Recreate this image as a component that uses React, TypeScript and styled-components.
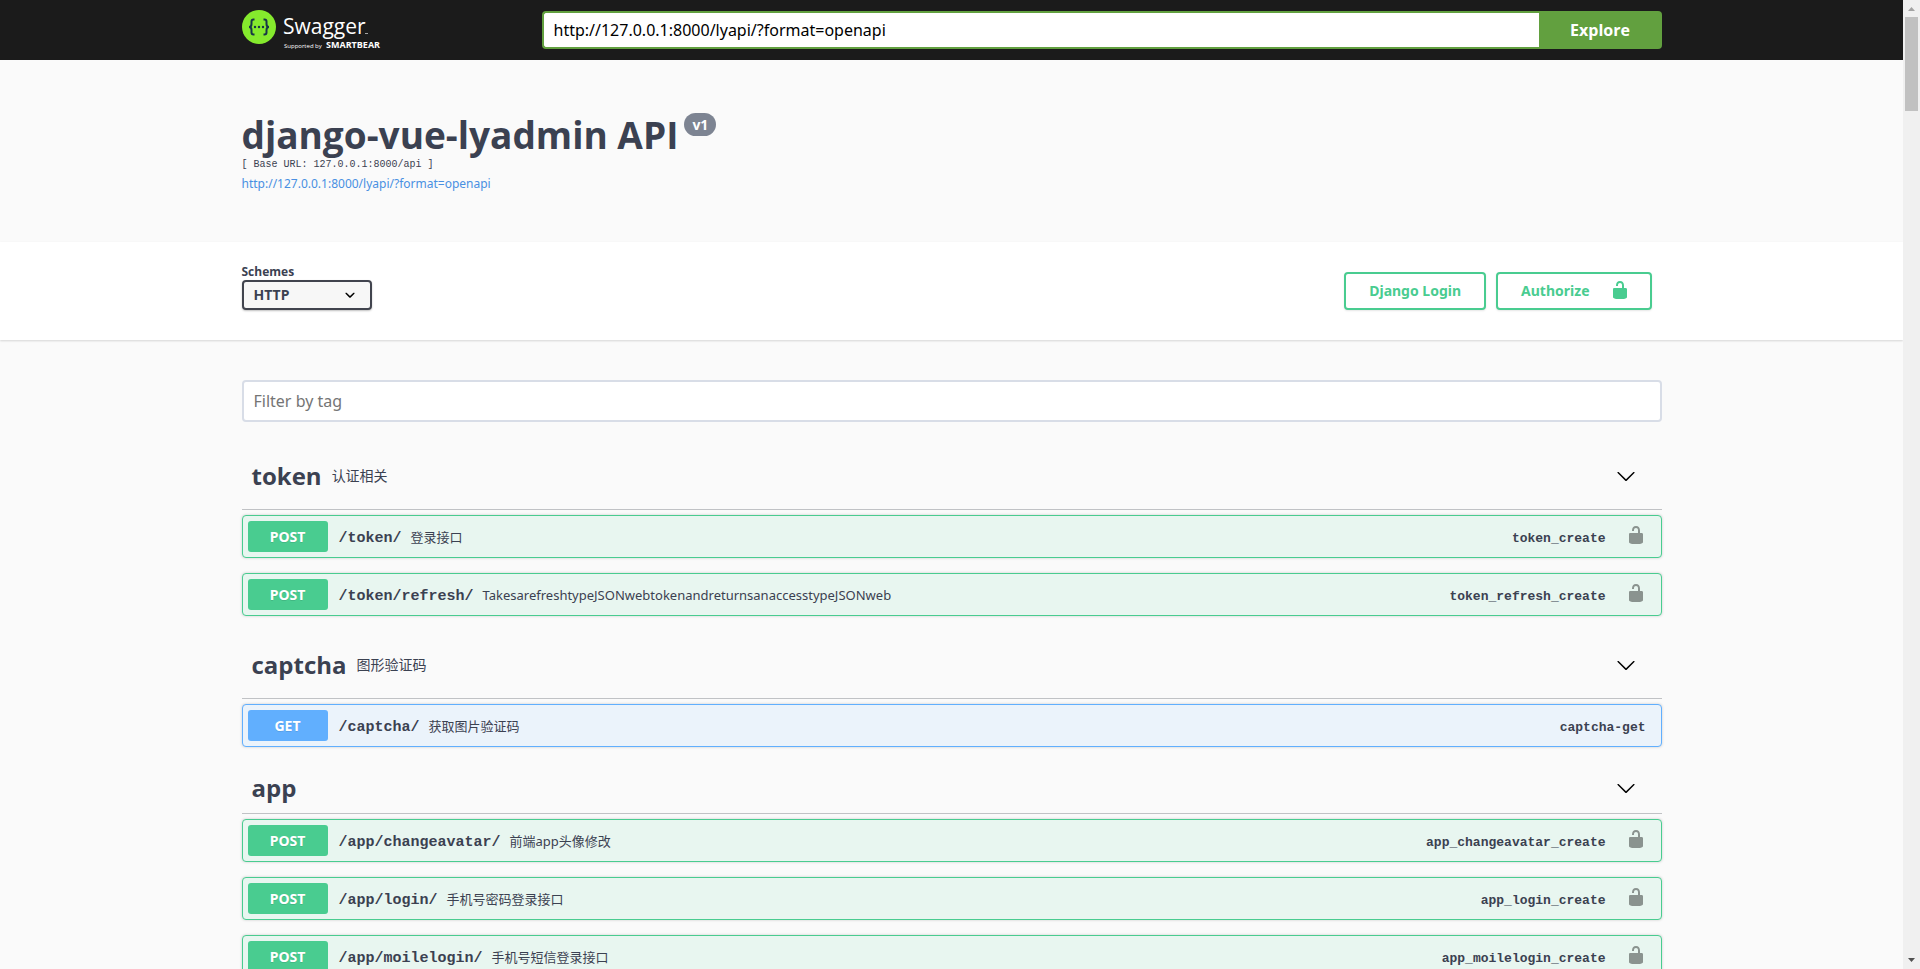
import React from "react";
import styled, { createGlobalStyle, css } from "styled-components";

const sans = `"Noto Sans", "Noto Sans CJK SC", sans-serif`;
const boldSans = `"Open Sans", "Noto Sans CJK SC", sans-serif`;
const mono = `"Liberation Mono", monospace`;

const GlobalStyle = createGlobalStyle`
  *, *::before, *::after { box-sizing: border-box; }
  body { margin: 0; background: #fafafa; color: #3b4151; font-family: ${sans}; }
  h1, h2, p { margin: 0; }
  h1, h2 { font-family: ${boldSans}; }
  button, input, select { font-family: ${sans}; }
`;

const Shell = styled.div`
  display: flex;
  height: 100vh;
`;

const Page = styled.div`
  flex: 1;
  min-width: 0;
  overflow-y: auto;
  scrollbar-width: none;
`;

const Wrapper = styled.div`
  width: 100%;
  max-width: 1460px;
  margin: 0 auto;
  padding: 0 20px;
`;

const Topbar = styled.header`
  background: #1b1b1b;
  padding: 10px 0;
`;

const TopbarRow = styled(Wrapper)`
  display: flex;
  align-items: center;
`;

const LogoLink = styled.a`
  flex: 0 0 300px;
  height: 40px;
  svg { display: block; }
`;

const UrlForm = styled.form`
  display: flex;
  flex: 1;
  height: 38px;
`;

const UrlInput = styled.input`
  flex: 1;
  min-width: 0;
  padding: 0 10px;
  border: 2px solid #62a03f;
  border-right: 0;
  border-radius: 4px 0 0 4px;
  background: #fff;
  color: #000;
  font-size: 16px;
  outline: none;
`;

const ExploreButton = styled.button`
  width: 123px;
  border: 0;
  border-radius: 0 4px 4px 0;
  background: #62a03f;
  color: #fff;
  font-family: ${boldSans};
  font-size: 16px;
  font-weight: 700;
`;

const Info = styled(Wrapper)`
  padding-top: 50px;
  padding-bottom: 49px;
`;

const Title = styled.h1`
  display: flex;
  align-items: flex-start;
  gap: 6px;
  font-size: 37px;
  line-height: 49px;
`;

const Version = styled.small`
  margin-top: 3px;
  padding: 0 8px;
  border-radius: 12px;
  background: #7d8492;
  color: #fff;
  font-size: 14px;
  line-height: 23px;
`;

const BaseUrl = styled.pre`
  margin: 0;
  font-family: ${mono};
  font-size: 10px;
  line-height: 12px;
`;

const SpecLink = styled.a`
  display: block;
  margin: 4px 0 0;
  color: #4990e2;
  font-size: 12px;
  line-height: 18px;
  text-decoration: none;
`;

const SchemeBar = styled.section`
  background: #fff;
  padding: 22px 0 30px;
  box-shadow: 0 1px 2px rgba(0, 0, 0, 0.15);
`;

const SchemeRow = styled(Wrapper)`
  display: flex;
  justify-content: space-between;
  align-items: flex-end;
`;

const SchemeLabel = styled.label`
  display: flex;
  flex-direction: column;
  font-family: ${boldSans};
  font-size: 12px;
  font-weight: 700;
  line-height: 16px;
`;

const SelectBox = styled.span`
  position: relative;
  width: 130px;
  svg {
    position: absolute;
    right: 12px;
    top: 5px;
    pointer-events: none;
  }
`;

const Select = styled.select`
  display: block;
  appearance: none;
  width: 100%;
  height: 30px;
  padding: 0 10px 2px;
  border: 2px solid #41444e;
  border-radius: 4px;
  background: #f7f7f7;
  box-shadow: 0 1px 2px rgba(0, 0, 0, 0.25);
  color: #3b4151;
  font-size: 14px;
  font-weight: 700;
`;

const AuthButtons = styled.div`
  display: flex;
  gap: 10px;
  padding-right: 10px;
`;

const AuthButton = styled.button`
  display: flex;
  align-items: center;
  justify-content: space-between;
  height: 38px;
  padding: 0 23px 2px;
  border: 2px solid #49cc90;
  border-radius: 4px;
  background: #fff;
  box-shadow: 0 1px 2px rgba(0, 0, 0, 0.1);
  color: #49cc90;
  font-size: 14px;
  font-weight: 700;
  svg { margin: 0 -3px 0 20px; fill: #49cc90; }
`;

const FilterInput = styled.input`
  display: block;
  width: 100%;
  height: 42px;
  margin: 40px 0 20px;
  padding: 0 10px;
  border: 2px solid #d8dde7;
  border-radius: 4px;
  background: #fff;
  font-size: 16px;
  outline: none;
  &::placeholder { color: #757575; opacity: 1; }
`;

const TagHeader = styled.div`
  display: flex;
  align-items: center;
  margin-bottom: 5px;
  padding: 10px 20px 10px 10px;
  border-bottom: 1px solid #c0c2c5;
`;

const TagName = styled.h2`
  font-size: 24px;
  line-height: 31px;
`;

const TagDescription = styled.p`
  padding: 14px 10px;
  font-size: 14px;
  line-height: 19px;
`;

const IconButton = styled.button`
  display: flex;
  margin-left: auto;
  padding: 0 6px;
  border: 0;
  background: none;
`;

type Method = "POST" | "GET";
const colors = {
  POST: { main: "#49cc90", tint: "#e8f6f0" },
  GET: { main: "#61affe", tint: "#ebf3fb" },
};

const OpBlock = styled.article<{ $method: Method }>`
  display: flex;
  align-items: center;
  height: 43px;
  margin-bottom: 15px;
  padding: 0 5px;
  border-radius: 4px;
  box-shadow: 0 0 3px rgba(0, 0, 0, 0.19);
  ${({ $method }) => css`
    border: 1px solid ${colors[$method].main};
    background: ${colors[$method].tint};
  `}
`;

const MethodBadge = styled.span<{ $method: Method }>`
  width: 80px;
  border-radius: 3px;
  background: ${({ $method }) => colors[$method].main};
  color: #fff;
  font-size: 14px;
  font-weight: 700;
  line-height: 31px;
  text-align: center;
  text-shadow: 0 1px 0 rgba(0, 0, 0, 0.1);
`;

const Path = styled.a`
  padding: 3px 9px 0 11px;
  color: #3b4151;
  font-family: ${mono};
  font-size: 15px;
  font-weight: 700;
  text-decoration: none;
`;

const Summary = styled.span`
  flex: 1;
  font-size: 13px;
`;

const OperationId = styled.span`
  padding: 3px 10px 0;
  font-family: ${mono};
  font-size: 13px;
  font-weight: 700;
`;

const LockButton = styled.button`
  padding: 0 10px 3px;
  border: 0;
  background: none;
  opacity: 0.4;
  svg { display: block; }
`;

const Scrollbar = styled.div`
  display: flex;
  flex-direction: column;
  align-items: center;
  width: 17px;
  background: #f0f0f0;
`;

const ScrollArrow = styled.svg`
  width: 17px;
  height: 17px;
  flex: none;
`;

const ScrollTrack = styled.div`
  flex: 1;
  width: 13px;
`;

const ScrollThumb = styled.div`
  height: 10%;
  background: #c1c1c1;
`;

const UnlockedIcon = () => (
  <svg width="20" height="20" viewBox="0 0 20 20" aria-hidden="true">
    <path d="M15.8 8H14V5.6C14 2.703 12.665 1 10 1 7.334 1 6 2.703 6 5.6V6h2v-.801C8 3.754 8.797 3 10 3c1.203 0 2 .754 2 2.199V8H4c-.553 0-1 .646-1 1.199V17c0 .549.428 1.139.951 1.307l1.197.387C5.672 18.861 6.55 19 7.1 19h5.8c.549 0 1.428-.139 1.951-.307l1.196-.387c.524-.167.953-.757.953-1.306V9.199C17 8.646 16.352 8 15.8 8z" />
  </svg>
);

const LargeArrow = () => (
  <svg width="20" height="20" viewBox="0 0 20 20" aria-hidden="true">
    <path d="M17.418 6.109c.272-.268.709-.268.979 0s.271.701 0 .969l-7.908 7.83c-.27.268-.707.268-.979 0l-7.908-7.83c-.27-.268-.27-.701 0-.969.271-.268.709-.268.979 0L10 13.25l7.418-7.141z" />
  </svg>
);

const SmallArrow = () => (
  <svg width="20" height="20" viewBox="0 0 20 20" aria-hidden="true">
    <path d="M13.418 7.859c.271-.268.709-.268.978 0s.272.701 0 .969l-3.908 3.83c-.27.268-.707.268-.979 0l-3.908-3.83c-.27-.267-.27-.701 0-.969.271-.268.709-.268.978 0L10 11l3.418-3.141z" />
  </svg>
);

const Logo = () => (
  <svg width="150" height="40" viewBox="0 0 150 40" role="img" aria-label="Swagger">
    <circle cx="17" cy="17" r="17" fill="#85ea2d" />
    <g fill="none" stroke="#173647" strokeWidth="2">
      <path d="M12.500 9.500h-1q-2 0-2 2v2.500q0 3-2.500 3q2.500 0 2.500 3v2.500q0 2 2 2h1" />
      <path d="M21.500 9.500h1q2 0 2 2v2.500q0 3 2.500 3q-2.500 0-2.500 3v2.500q0 2-2 2h-1" />
    </g>
    <g fill="#173647">
      <circle cx="13" cy="17" r="1.200" />
      <circle cx="17" cy="17" r="1.200" />
      <circle cx="21" cy="17" r="1.200" />
    </g>
    <g fill="#fff" fontFamily="Open Sans, sans-serif">
      <text x="41" y="24" fontSize="21">Swagger</text>
      <rect x="123" y="23" width="3" height="1" opacity=".6" />
      <text x="42" y="38" fontSize="6">Supported by</text>
      <text x="84" y="38" fontSize="9" fontWeight="700">SMARTBEAR</text>
    </g>
  </svg>
);

type Operation = { method: Method; path: string; summary: string; id: string; locked?: boolean };
type Tag = { name: string; description?: string; operations: Operation[] };

const tags: Tag[] = [
  {
    name: "token",
    description: "认证相关",
    operations: [
      { method: "POST", path: "/token/", summary: "登录接口", id: "token_create", locked: true },
      {
        method: "POST",
        path: "/token/refresh/",
        summary: "TakesarefreshtypeJSONwebtokenandreturnsanaccesstypeJSONweb",
        id: "token_refresh_create",
        locked: true,
      },
    ],
  },
  {
    name: "captcha",
    description: "图形验证码",
    operations: [{ method: "GET", path: "/captcha/", summary: "获取图片验证码", id: "captcha-get" }],
  },
  {
    name: "app",
    operations: [
      { method: "POST", path: "/app/changeavatar/", summary: "前端app头像修改", id: "app_changeavatar_create", locked: true },
      { method: "POST", path: "/app/login/", summary: "手机号密码登录接口", id: "app_login_create", locked: true },
      { method: "POST", path: "/app/moilelogin/", summary: "手机号短信登录接口", id: "app_moilelogin_create", locked: true },
    ],
  },
];

const TagSection = ({ tag }: { tag: Tag }) => (
  <section>
    <TagHeader>
      <TagName>{tag.name}</TagName>
      {tag.description && <TagDescription>{tag.description}</TagDescription>}
      <IconButton type="button" aria-label={`Collapse ${tag.name}`}>
        <LargeArrow />
      </IconButton>
    </TagHeader>
    {tag.operations.map((op) => (
      <OpBlock key={op.id} $method={op.method}>
        <MethodBadge $method={op.method}>{op.method}</MethodBadge>
        <Path href={`#${op.id}`}>{op.path}</Path>
        <Summary>{op.summary}</Summary>
        <OperationId>{op.id}</OperationId>
        {op.locked && (
          <LockButton type="button" aria-label={`Authorize ${op.id}`}>
            <UnlockedIcon />
          </LockButton>
        )}
      </OpBlock>
    ))}
  </section>
);

export default function App() {
  return (
    <Shell>
      <GlobalStyle />
      <Page>
        <Topbar>
          <TopbarRow>
            <LogoLink href="#">
              <Logo />
            </LogoLink>
            <UrlForm onSubmit={(e) => e.preventDefault()}>
              <UrlInput aria-label="Specification URL" defaultValue="http://127.0.0.1:8000/lyapi/?format=openapi" />
              <ExploreButton type="submit">Explore</ExploreButton>
            </UrlForm>
          </TopbarRow>
        </Topbar>
        <Info as="section">
          <Title>
            django-vue-lyadmin API
            <Version>v1</Version>
          </Title>
          <BaseUrl>[ Base URL: 127.0.0.1:8000/api ]</BaseUrl>
          <SpecLink href="#spec">http://127.0.0.1:8000/lyapi/?format=openapi</SpecLink>
        </Info>
        <SchemeBar>
          <SchemeRow>
            <SchemeLabel>
              Schemes
              <SelectBox>
                <Select defaultValue="http">
                  <option value="http">HTTP</option>
                </Select>
                <SmallArrow />
              </SelectBox>
            </SchemeLabel>
            <AuthButtons>
              <AuthButton type="button">Django Login</AuthButton>
              <AuthButton type="button">
                Authorize
                <UnlockedIcon />
              </AuthButton>
            </AuthButtons>
          </SchemeRow>
        </SchemeBar>
        <Wrapper as="main">
          <FilterInput type="text" placeholder="Filter by tag" aria-label="Filter by tag" />
          {tags.map((tag) => (
            <TagSection key={tag.name} tag={tag} />
          ))}
        </Wrapper>
      </Page>
      <Scrollbar aria-hidden="true">
        <ScrollArrow viewBox="0 0 17 17">
          <path d="M5 11l3.500-4 3.500 4z" fill="#a3a3a3" />
        </ScrollArrow>
        <ScrollTrack>
          <ScrollThumb />
        </ScrollTrack>
        <ScrollArrow viewBox="0 0 17 17">
          <path d="M5 6l3.500 4 3.500-4z" fill="#505050" />
        </ScrollArrow>
      </Scrollbar>
    </Shell>
  );
}
